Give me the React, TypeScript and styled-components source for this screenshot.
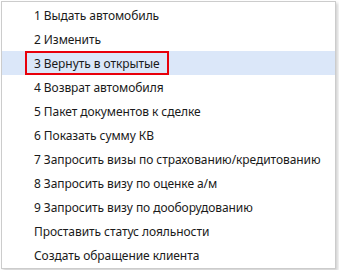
import React from 'react';
import styled, { createGlobalStyle } from 'styled-components';

const GlobalStyle = createGlobalStyle`
  html, body {
    margin: 0;
    padding: 0;
    background: #ffffff;
  }
  body {
    font-family: 'Noto Sans', 'Open Sans', sans-serif;
  }
`;

const items = [
  '1 Выдать автомобиль',
  '2 Изменить',
  '3 Вернуть в открытые',
  '4 Возврат автомобиля',
  '5 Пакет документов к сделке',
  '6 Показать сумму КВ',
  '7 Запросить визы по страхованию/кредитованию',
  '8 Запросить визу по оценке а/м',
  '9 Запросить визу по дооборудованию',
  'Проставить статус лояльности',
  'Создать обращение клиента',
];

const Page = styled.div`
  padding: 1px;
`;

const Menu = styled.ul`
  width: 333px;
  margin: 0;
  padding: 1px 0;
  list-style: none;
  background: #fff;
  border: 1px solid #cccccc;
  box-shadow: 2px 2px 3px rgba(0, 0, 0, 0.18);
`;

const Item = styled.li<{ active: boolean }>`
  height: 24px;
  display: flex;
  align-items: center;
  padding-left: 32px;
  font-size: 12px;
  letter-spacing: -0.07px;
  color: #1a1a1a;
  white-space: nowrap;
  background: ${({ active }) => (active ? '#dbe7f9' : 'transparent')};
`;

const Label = styled.span<{ marked: boolean }>`
  box-sizing: border-box;
  display: inline-flex;
  align-items: center;
  height: ${({ marked }) => (marked ? '24px' : 'auto')};
  margin-left: ${({ marked }) => (marked ? '-9px' : '0')};
  padding: ${({ marked }) => (marked ? '0 7px' : '0')};
  border: ${({ marked }) => (marked ? '2px solid #e8000b' : 'none')};
`;

export default function App() {
  return (
    <Page>
      <GlobalStyle />
      <Menu>
        {items.map((text, i) => (
          <Item key={text} active={i === 2}>
            <Label marked={i === 2}>{text}</Label>
          </Item>
        ))}
      </Menu>
    </Page>
  );
}
